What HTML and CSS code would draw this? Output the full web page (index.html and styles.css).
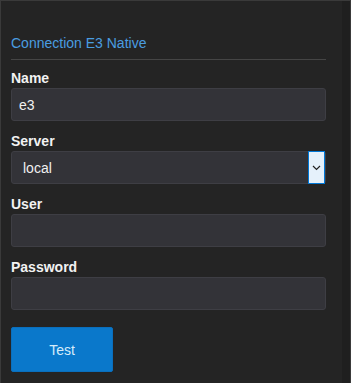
FILE: index.html
```html
<!DOCTYPE html>
<html>
<head>
<meta charset="utf-8">
<link rel="stylesheet" href="styles.css">
</head>
<body>
<div class="frame">
  <div class="panel">
    <div class="title">Connection E3 Native</div>
    <div class="rule"></div>
    <label class="label">Name</label>
    <div class="field"><span class="value">e3</span></div>
    <label class="label">Server</label>
    <div class="field select">
      <span class="value sel">local</span>
      <span class="arrow">
        <svg width="9" height="6" viewBox="0 0 9 6"><path d="M1 1 L4.5 4.5 L8 1" fill="none" stroke="#222" stroke-width="1.2"/></svg>
      </span>
    </div>
    <label class="label">User</label>
    <div class="field"></div>
    <label class="label">Password</label>
    <div class="field"></div>
    <div class="actions"><button class="btn">Test</button></div>
  </div>
  <div class="strip"></div>
</div>
</body>
</html>
```

FILE: styles.css
```css
html, body {
  margin: 0;
  padding: 0;
  background: #232323;
  height: 100%;
}
body {
  font-family: "Liberation Sans", Arial, sans-serif;
}
.frame {
  display: flex;
  height: 383px;
  box-sizing: border-box;
  border-top: 1px solid #3a3a3a;
  border-left: 1px solid #3a3a3a;
  border-right: 1px solid #3a3a3a;
}
.panel {
  flex: 1;
  background: #242424;
  padding: 32px 16px 0 10px;
  display: flex;
  flex-direction: column;
}
.strip {
  width: 8px;
  background: #1f1f1f;
}
.title {
  color: #4a9de0;
  font-size: 14px;
  line-height: 20px;
}
.rule {
  height: 1px;
  background: #454545;
  margin-top: 6px;
  margin-bottom: 9px;
}
.label {
  color: #f2f2f2;
  font-weight: bold;
  font-size: 14px;
  line-height: 18px;
}
.field {
  height: 33px;
  box-sizing: border-box;
  background: #333338;
  border: 1px solid #3e3e44;
  border-radius: 3px;
  margin-top: 1px;
  margin-bottom: 11px;
  display: flex;
  align-items: center;
  position: relative;
}
.value {
  color: #f0f0f0;
  font-size: 14px;
  padding-left: 7px;
}
.value.sel {
  padding-left: 11px;
}
.arrow {
  position: absolute;
  right: 0;
  top: -1px;
  width: 17px;
  height: 33px;
  box-sizing: border-box;
  background: #e5f1fb;
  border: 1px solid #0078d7;
  display: flex;
  align-items: center;
  justify-content: center;
}
.actions {
  margin-top: 6px;
}
.btn {
  width: 102px;
  height: 45px;
  background: #0a78cb;
  border: 1px solid #0a6fbd;
  border-radius: 2px;
  color: #d6ecfa;
  font-family: "Liberation Sans", Arial, sans-serif;
  font-size: 14px;
  padding: 0;
}
```
